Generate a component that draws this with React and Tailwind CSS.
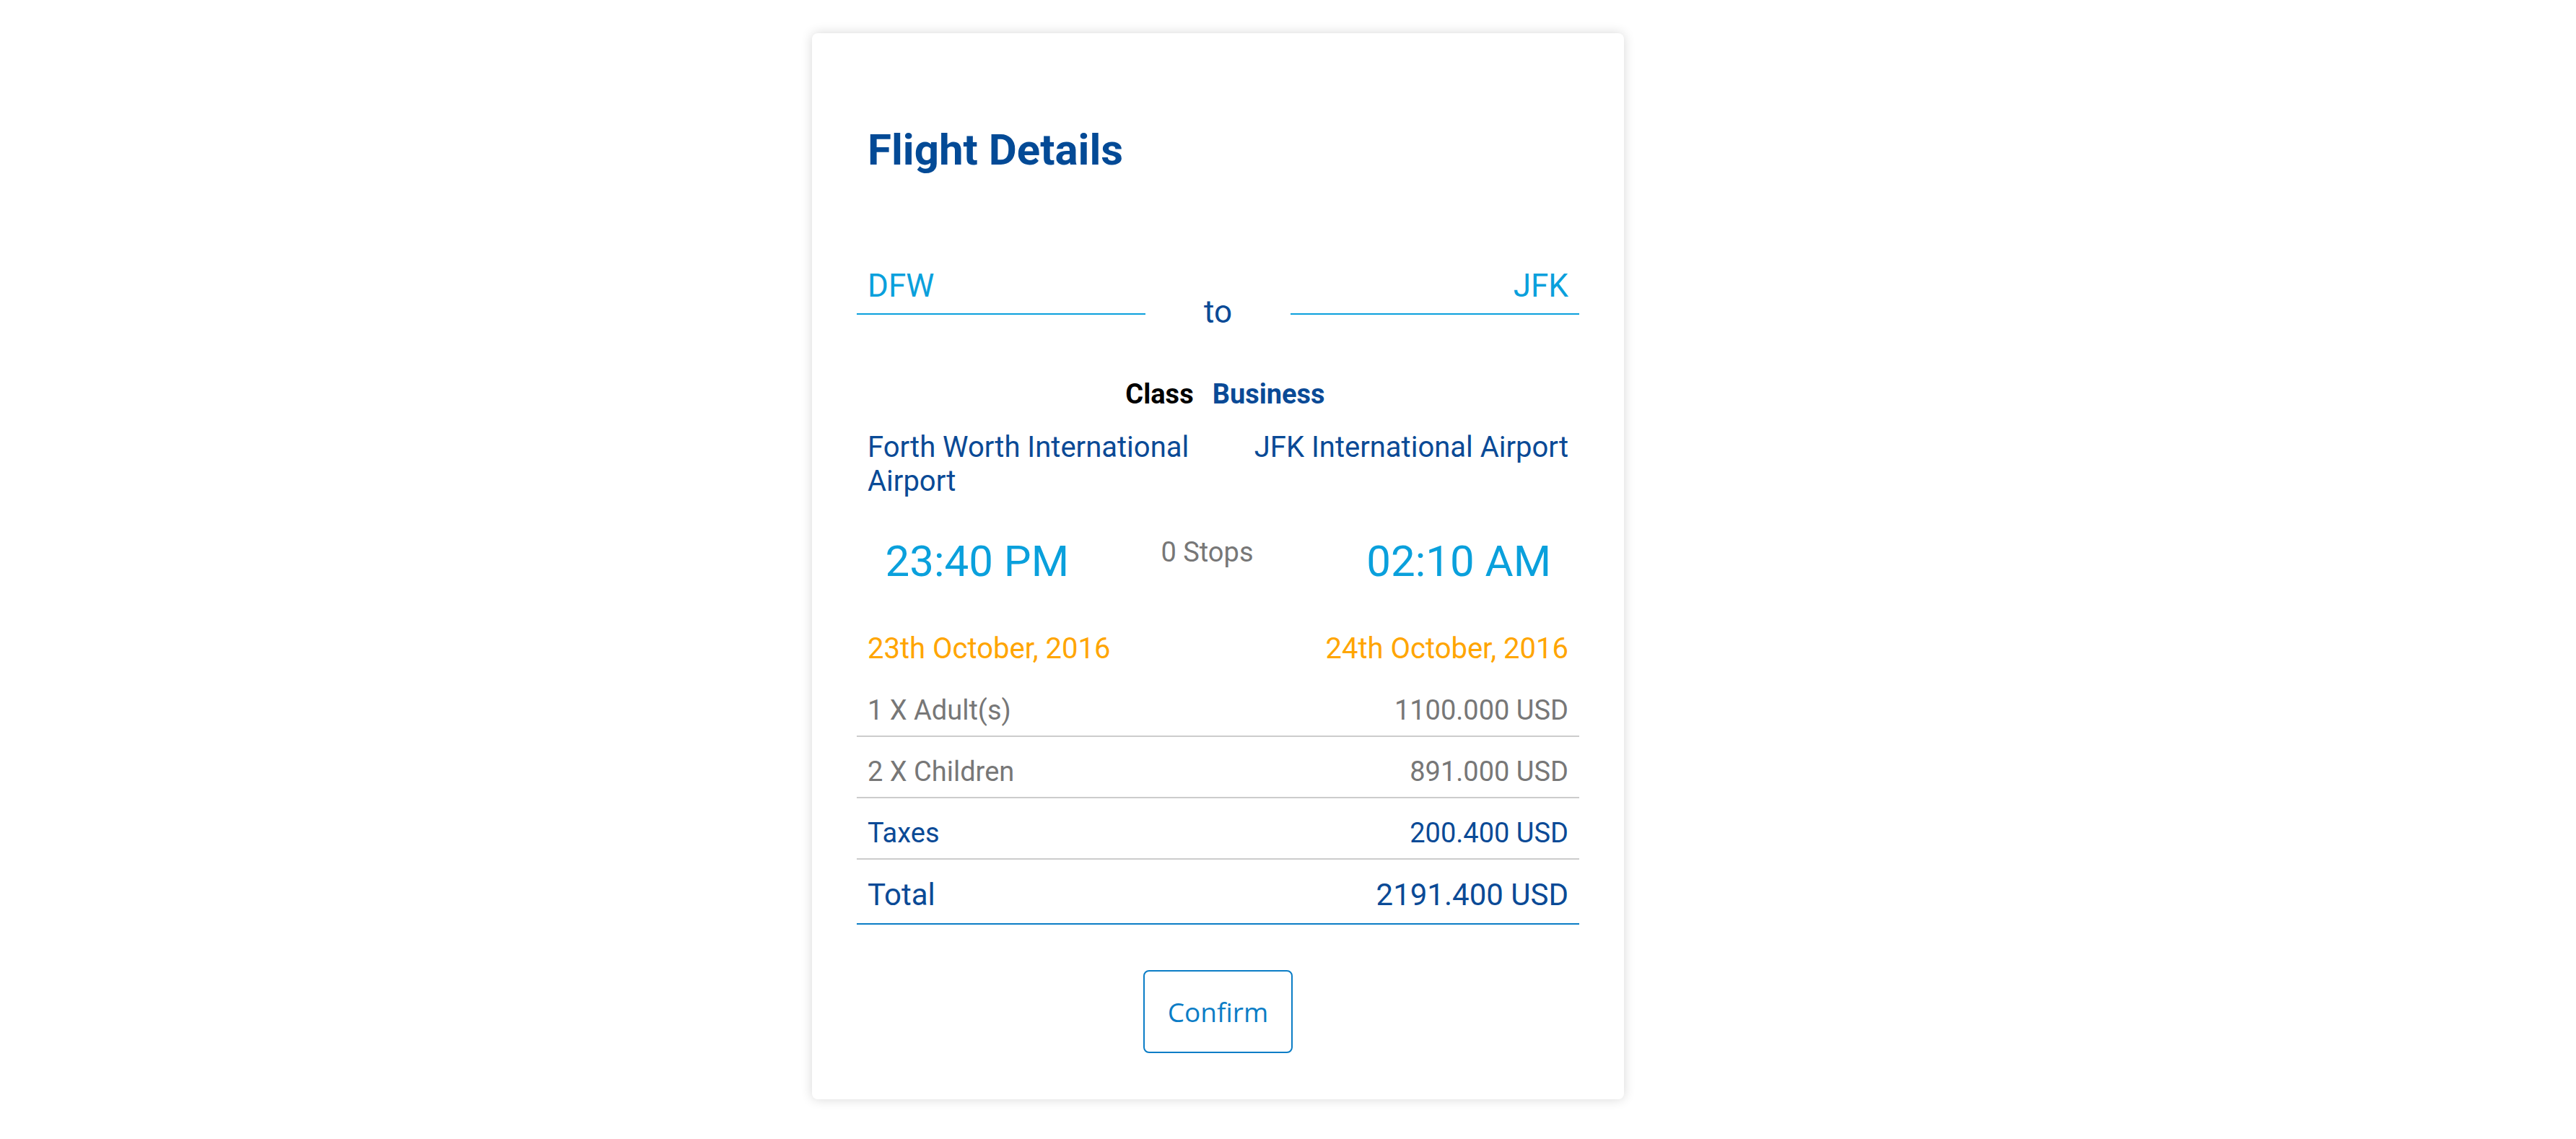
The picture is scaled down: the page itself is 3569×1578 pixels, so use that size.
const rows = [
  { label: '1 X Adult(s)', value: '1100.000 USD', tone: 'text-[#777777]' },
  { label: '2 X Children', value: '891.000 USD', tone: 'text-[#777777]' },
  { label: 'Taxes', value: '200.400 USD', tone: 'text-[#0a4a96]' }
]

export default function App() {
  return (
    <div className="min-h-[1578px] bg-white font-['Roboto',sans-serif]">
      <div className="pt-[46px] pl-[1125px]">
        {/* Card */}
        <div className="w-[1125px] rounded-[8px] bg-white px-[62px] pt-[126px] pb-[64px] shadow-[0_0_16px_rgba(0,0,0,0.16)]">
          <h1 className="pl-[15px] text-[60px] leading-[72px] font-bold text-[#034a96]">
            Flight Details
          </h1>

          {/* Route */}
          <div className="mt-[126px] flex items-start">
            <div className="w-[40%] border-b-2 border-[#0aa0dc] pb-[12px] pl-[15px] text-[44px] leading-[52px] text-[#0aa0dc]">
              DFW
            </div>
            <div className="w-[20%] pt-[36px] text-center text-[44px] leading-[52px] text-[#0a4a96]">
              to
            </div>
            <div className="w-[40%] border-b-2 border-[#0aa0dc] pb-[12px] pr-[15px] text-right text-[44px] leading-[52px] text-[#0aa0dc]">
              JFK
            </div>
          </div>

          {/* Class */}
          <div className="mt-[65px] flex justify-center gap-[26px] pl-[20px] text-[38px] leading-[46px] font-bold">
            <span className="text-black">Class</span>
            <span className="text-[#0a4a96]">Business</span>
          </div>

          {/* Airports */}
          <div className="mt-[27px] grid grid-cols-2 text-[40px] leading-[47px] text-[#0a4a96]">
            <div className="px-[15px]">Forth Worth International Airport</div>
            <div className="px-[15px] text-right">JFK International Airport</div>
          </div>

          {/* Times */}
          <div className="mt-[52px] grid grid-cols-3 items-start text-center">
            <div className="text-[60px] leading-[72px] text-[#0aa0dc]">23:40 PM</div>
            <div className="pr-[30px] text-[38px] leading-[46px] text-[#777777]">0 Stops</div>
            <div className="text-[60px] leading-[72px] text-[#0aa0dc]">02:10 AM</div>
          </div>

          {/* Dates */}
          <div className="mt-[62px] flex justify-between px-[15px] text-[40px] leading-[46px] text-[#ffa500]">
            <span>23th October, 2016</span>
            <span>24th October, 2016</span>
          </div>

          {/* Price rows */}
          <div className="mt-[14px]">
            {rows.map((row) => (
              <div
                key={row.label}
                className={`flex justify-between border-b-2 border-[#cccccc] px-[15px] pt-[25px] pb-[12px] text-[38px] leading-[46px] ${row.tone}`}
              >
                <span>{row.label}</span>
                <span>{row.value}</span>
              </div>
            ))}
            <div className="flex justify-between border-b-2 border-[#0b7dc6] px-[15px] pt-[24px] pb-[14px] text-[42px] leading-[50px] text-[#0a4a96]">
              <span>Total</span>
              <span>2191.400 USD</span>
            </div>
          </div>

          <div className="mt-[63px] flex justify-center">
            <button className="h-[115px] w-[207px] rounded-[8px] border-2 border-[#0b7dc6] bg-white font-['Open_Sans',sans-serif] text-[37px] text-[#0b7dc6]">
              Confirm
            </button>
          </div>
        </div>
      </div>
    </div>
  )
}
